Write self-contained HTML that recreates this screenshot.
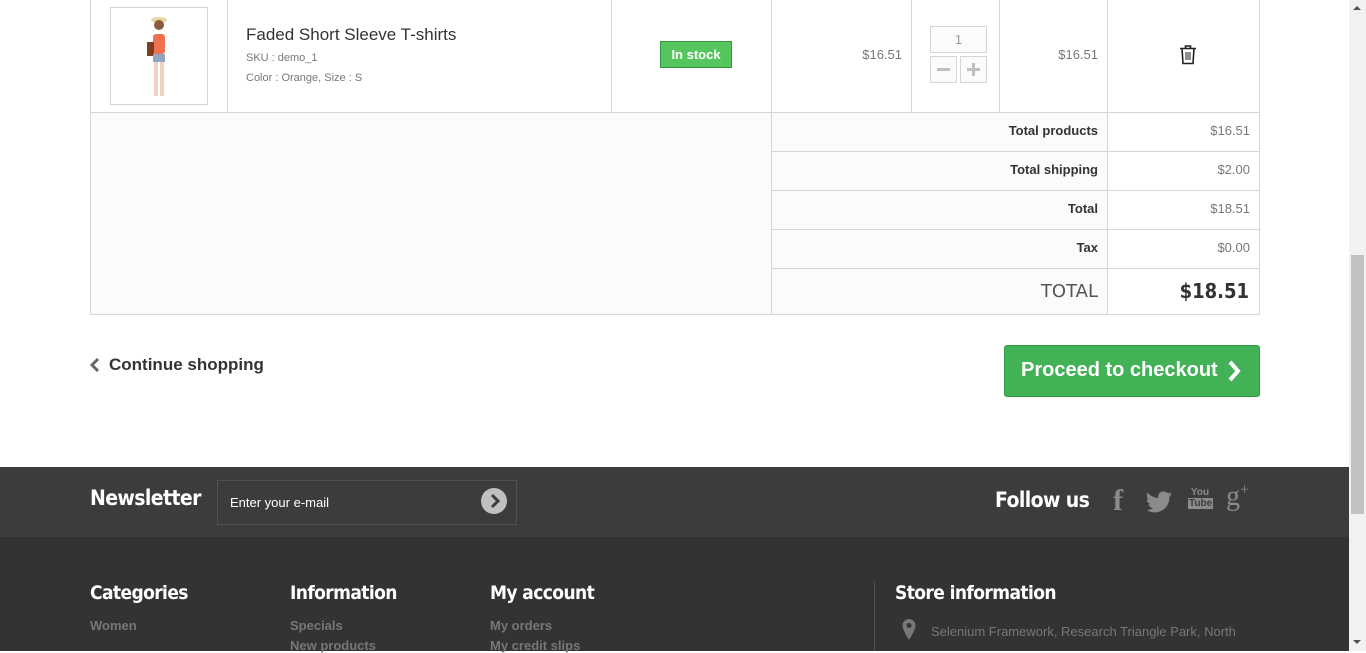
<!DOCTYPE html>
<html><head><meta charset="utf-8"><style>
*{margin:0;padding:0;box-sizing:border-box}
body{width:1366px;height:651px;overflow:hidden;background:#fff;font-family:"Liberation Sans",Arial,sans-serif;position:relative}
.a{position:absolute}
.b{border:1px solid #d6d4d4}
.lbl{font-size:13px;font-weight:bold;color:#333;text-align:right}
.val{font-size:13px;color:#777;text-align:right}
.ft a{display:block;color:#777;font-size:13px;font-weight:bold}
.h{color:#fff;font-size:19px;font-weight:bold;font-family:"DejaVu Sans Condensed","Liberation Sans",sans-serif;letter-spacing:-0.6px}
</style></head><body>
<div class="a" style="left:90px;top:-1px;width:1170px;height:316px;border:1px solid #d6d4d4"></div>
<div class="a" style="left:90px;top:112px;width:682px;height:203px;background:#fbfbfb;border:1px solid #d6d4d4"></div>
<div class="a" style="left:772px;top:113px;width:335px;height:201px;background:#fbfbfb"></div>
<div class="a" style="left:227px;top:0;width:1px;height:113px;background:#d6d4d4"></div>
<div class="a" style="left:611px;top:0;width:1px;height:113px;background:#d6d4d4"></div>
<div class="a" style="left:771px;top:0;width:1px;height:315px;background:#d6d4d4"></div>
<div class="a" style="left:911px;top:0;width:1px;height:113px;background:#d6d4d4"></div>
<div class="a" style="left:999px;top:0;width:1px;height:113px;background:#d6d4d4"></div>
<div class="a" style="left:1107px;top:0;width:1px;height:315px;background:#d6d4d4"></div>
<div class="a" style="left:772px;top:112px;width:488px;height:1px;background:#d6d4d4"></div>
<div class="a" style="left:772px;top:151px;width:488px;height:1px;background:#d6d4d4"></div>
<div class="a" style="left:772px;top:190px;width:488px;height:1px;background:#d6d4d4"></div>
<div class="a" style="left:772px;top:229px;width:488px;height:1px;background:#d6d4d4"></div>
<div class="a" style="left:772px;top:268px;width:488px;height:1px;background:#d6d4d4"></div>
<div class="a b" style="left:110px;top:7px;width:98px;height:98px;background:#fff">
<svg width="96" height="96" viewBox="0 0 96 96"><ellipse cx="48" cy="12" rx="8" ry="3" fill="#e6d8a0"/><circle cx="48" cy="17" r="5" fill="#8a5a3a"/><rect x="42" y="26" width="12" height="20" rx="3" fill="#f07050"/><rect x="36" y="34" width="7" height="14" fill="#7a4020"/><rect x="42" y="46" width="12" height="8" fill="#8fa6c0"/><rect x="43" y="54" width="4" height="34" fill="#f0d0c0"/><rect x="49" y="54" width="4" height="34" fill="#f0d0c0"/></svg></div>
<div class="a" style="left:246px;top:25px;font-size:17px;color:#333">Faded Short Sleeve T-shirts</div>
<div class="a" style="left:246px;top:52px;font-size:11px;color:#777">SKU : demo_1</div>
<div class="a" style="left:246px;top:72px;font-size:11px;color:#777">Color : Orange, Size : S</div>
<div class="a" style="left:660px;top:41px;width:72px;height:27px;background:#55c65e;border:1px solid #36943e;color:#fff;font-weight:bold;font-size:13px;text-align:center;line-height:25px">In stock</div>
<div class="a val" style="left:780px;top:47px;width:122px">$16.51</div>
<div class="a b" style="left:930px;top:26px;width:57px;height:27px;background:#fbfbfb;text-align:center;line-height:25px;font-size:13px;color:#999">1</div>
<div class="a b" style="left:930px;top:56px;width:27px;height:27px;background:#fbfbfb"><div class="a" style="left:6px;top:11px;width:13px;height:3px;background:#c0c0c0"></div></div>
<div class="a b" style="left:960px;top:56px;width:27px;height:27px;background:#fbfbfb"><div class="a" style="left:6px;top:11px;width:13px;height:3px;background:#c0c0c0"></div><div class="a" style="left:11px;top:6px;width:3px;height:13px;background:#c0c0c0"></div></div>
<div class="a val" style="left:1010px;top:47px;width:88px">$16.51</div>
<svg class="a" style="left:1179px;top:44px" width="18" height="21" viewBox="0 0 18 21"><path d="M1 4.5h16M6.5 4.5V2h5v2.5M3 4.5l1 15h10l1-15" fill="none" stroke="#222" stroke-width="1.6"/><path d="M7 8v8M9 8v8M11 8v8" stroke="#222" stroke-width="1"/></svg>
<div class="a lbl" style="left:780px;top:123px;width:318px">Total products</div>
<div class="a val" style="left:1110px;top:123px;width:140px">$16.51</div>
<div class="a lbl" style="left:780px;top:162px;width:318px">Total shipping</div>
<div class="a val" style="left:1110px;top:162px;width:140px">$2.00</div>
<div class="a lbl" style="left:780px;top:201px;width:318px">Total</div>
<div class="a val" style="left:1110px;top:201px;width:140px">$18.51</div>
<div class="a lbl" style="left:780px;top:240px;width:318px">Tax</div>
<div class="a val" style="left:1110px;top:240px;width:140px">$0.00</div>
<div class="a" style="left:780px;top:281px;width:318px;text-align:right;font-size:18px;color:#555;font-family:'DejaVu Sans','Liberation Sans',sans-serif">TOTAL</div>
<div class="a" style="left:1110px;top:279px;width:139px;text-align:right;font-size:20px;font-weight:bold;color:#333;font-family:'DejaVu Sans Condensed','Liberation Sans',sans-serif">$18.51</div>
<div class="a" style="left:109px;top:355px;font-size:17px;font-weight:bold;color:#333">Continue shopping</div>
<svg class="a" style="left:89px;top:357px" width="12" height="16"><path d="M9 2L3 8l6 6" fill="none" stroke="#666" stroke-width="3"/></svg>
<div class="a" style="left:1004px;top:345px;width:256px;height:52px;background:#43b155;border:1px solid #2f9c41;border-radius:3px;color:#fff;font-weight:bold;font-size:20px;line-height:48px;padding-left:16px">Proceed to checkout</div>
<svg class="a" style="left:1226px;top:359px" width="16" height="24"><path d="M4 3l8 9-8 9" fill="none" stroke="#fff" stroke-width="4"/></svg>
<div class="a" style="left:0;top:467px;width:1349px;height:70px;background:#3c3c3c"></div>
<div class="a" style="left:0;top:537px;width:1349px;height:114px;background:#333"></div>
<div class="a h" style="left:90px;top:486px;font-size:21px">Newsletter</div>
<div class="a" style="left:217px;top:480px;width:300px;height:45px;border:1px solid #515151;background:#3c3c3c"></div>
<div class="a" style="left:230px;top:495px;color:#fff;font-size:13px">Enter your e-mail</div>
<div class="a" style="left:481px;top:488px;width:26px;height:26px;border-radius:50%;background:#c0c0c0"></div>
<svg class="a" style="left:481px;top:488px" width="26" height="26"><path d="M11 7l6 6-6 6" fill="none" stroke="#3c3c3c" stroke-width="3"/></svg>
<div class="a h" style="left:995px;top:488px;font-size:21px">Follow us</div>
<div class="a" style="left:1113px;top:484px;font-size:30px;font-weight:bold;color:#8b8b8b;font-family:'Liberation Serif',serif">f</div>
<svg class="a" style="left:1147px;top:491px" width="26" height="22"><path d="M25 3c-1 .5-2 .7-3 .8 1-.7 2-1.6 2.3-2.8-1 .6-2 1-3.2 1.2C19 1 17.8.5 16.4.5c-3 0-5.3 2.4-5.3 5.3 0 .4 0 .8.1 1.2C6.8 6.8 3 4.7.3 1.5c-.5.8-.7 1.7-.7 2.7 0 1.8.9 3.4 2.3 4.4-.9 0-1.7-.3-2.4-.7 0 2.6 1.8 4.7 4.2 5.2-.8.2-1.6.3-2.4.1.7 2.1 2.6 3.6 4.9 3.7C4.4 18.3 2 19.1-.5 19c2.3 1.5 5.1 2.4 8 2.4 9.7 0 15-8 15-15v-.7C23.5 5 24.4 4 25 3z" fill="#8b8b8b"/></svg>
<div class="a" style="left:1188px;top:487px;width:24px;color:#8b8b8b;font-size:10px;font-weight:bold;text-align:center;line-height:11px">You<br><span style="background:#8b8b8b;color:#3c3c3c;padding:0 1px">Tube</span></div>
<div class="a" style="left:1226px;top:481px;color:#8b8b8b;font-size:28px;font-family:'Liberation Serif',serif">g<sup style="font-size:16px">+</sup></div>
<div class="a h" style="left:90px;top:582px">Categories</div>
<div class="a h" style="left:290px;top:582px">Information</div>
<div class="a h" style="left:490px;top:582px">My account</div>
<div class="a h" style="left:895px;top:582px">Store information</div>
<div class="a" style="left:874px;top:582px;width:1px;height:69px;background:#515151"></div>
<div class="a ft" style="left:90px;top:618px"><a>Women</a></div>
<div class="a ft" style="left:290px;top:618px"><a>Specials</a><a style="margin-top:5px">New products</a></div>
<div class="a ft" style="left:490px;top:618px"><a>My orders</a><a style="margin-top:5px">My credit slips</a></div>
<svg class="a" style="left:901px;top:618px" width="16" height="24"><path d="M8 1a6.5 6.5 0 0 0-6.5 6.5C1.5 12 8 22 8 22s6.5-10 6.5-14.5A6.5 6.5 0 0 0 8 1zm0 9a2.5 2.5 0 1 1 0-5 2.5 2.5 0 0 1 0 5z" fill="#777"/></svg>
<div class="a" style="left:931px;top:624px;color:#777;font-size:13px">Selenium Framework, Research Triangle Park, North</div>
<div class="a" style="left:1349px;top:0;width:17px;height:651px;background:#f1f1f1"></div>
<div class="a" style="left:1351px;top:255px;width:13px;height:259px;background:#c1c1c1"></div>
<div class="a" style="left:1353px;top:6px;width:0;height:0;border-left:4px solid transparent;border-right:4px solid transparent;border-bottom:4px solid #505050"></div>
<div class="a" style="left:1353px;top:640px;width:0;height:0;border-left:4px solid transparent;border-right:4px solid transparent;border-top:4px solid #505050"></div>
</body></html>
